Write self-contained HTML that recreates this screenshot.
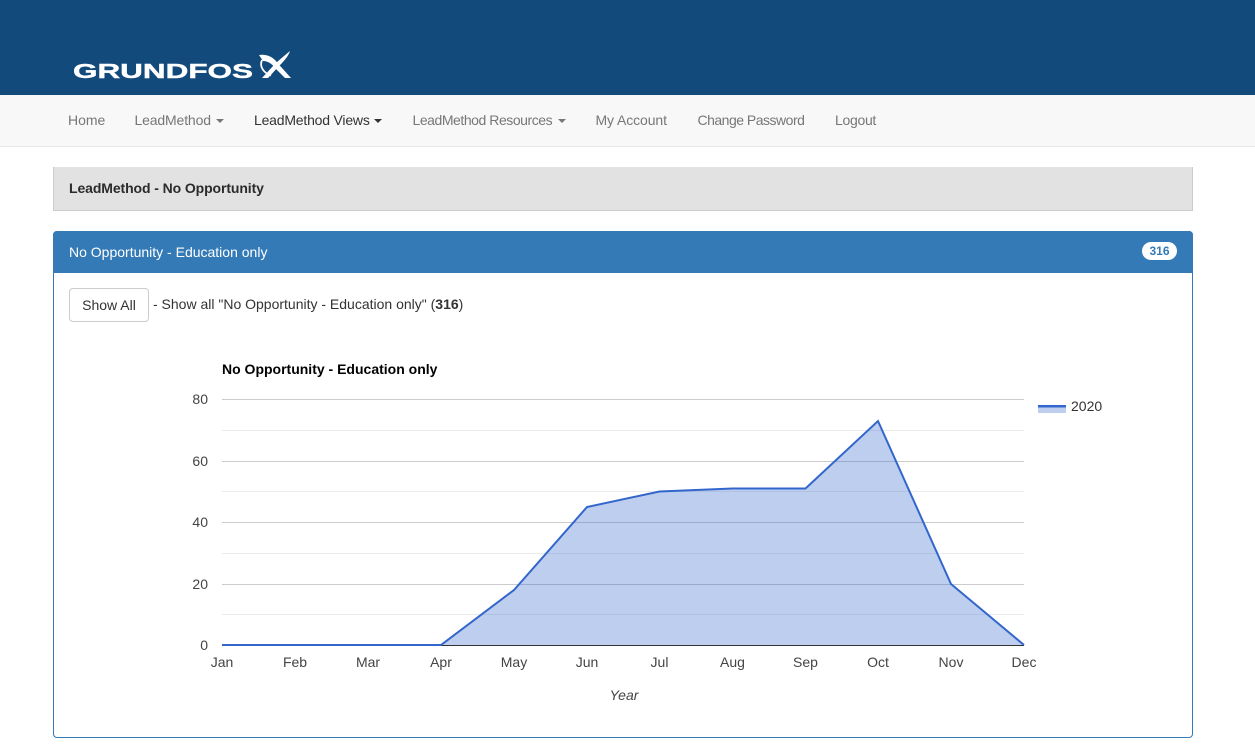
<!DOCTYPE html>
<html><head><meta charset="utf-8"><title>LeadMethod</title>
<style>
html,body{margin:0;padding:0;background:#fff}
body{width:1255px;height:751px;position:relative;overflow:hidden;font-family:"Liberation Sans",sans-serif;font-size:14px;color:#333}
.a{position:absolute;white-space:nowrap}
.n{top:112px;line-height:16px;font-size:14px;color:#777}
.c{display:inline-block;width:0;height:0;border-top:4px solid #777;border-left:4px solid transparent;border-right:4px solid transparent;vertical-align:middle;margin-left:1px;letter-spacing:0}
</style></head><body>
<div class="a" style="left:0;top:0;width:1255px;height:95px;background:#134a7c"></div>
<svg class="a" style="left:0;top:0" width="320" height="95" viewBox="0 0 320 95">
<text x="73" y="78" font-family="Liberation Sans" font-weight="700" font-size="20" fill="#fff" stroke="#fff" stroke-width=".4" textLength="180" lengthAdjust="spacingAndGlyphs">GRUNDFOS</text>
<path d="M259 55C265 54 271 56 275 60C278 63 280 66 282 68L291 78H285L276 69C273 65 269 61 263 61Z" fill="#fff"/>
<path d="M262 60C259 67 264 73 271 75.500" fill="none" stroke="#fff" stroke-width="1.800"/>
<path d="M290 51C288 57 283 62 279 66L268 78H262L274 65C279 60 284 56 290 51Z" fill="#fff"/>
</svg>
<div class="a" style="left:0;top:95px;width:1255px;height:51px;background:#f8f8f8;border-bottom:1px solid #e7e7e7"></div>
<div class="a n" style="left:68px">Home</div>
<div class="a n" style="left:134.5px;letter-spacing:-.15px">LeadMethod <span class="c"></span></div>
<div class="a n" style="left:254px;color:#333;letter-spacing:-.2px">LeadMethod Views <span class="c" style="border-top-color:#333"></span></div>
<div class="a n" style="left:412.5px;letter-spacing:-.45px">LeadMethod Resources <span class="c" style="margin-left:2px"></span></div>
<div class="a n" style="left:595.5px;letter-spacing:-.1px">My Account</div>
<div class="a n" style="left:697.5px;letter-spacing:-.5px">Change Password</div>
<div class="a n" style="left:835px;letter-spacing:-.3px">Logout</div>
<div class="a" style="left:53px;top:167px;width:1138px;height:43px;background:#e2e2e2;border:1px solid #ccc;border-top:0"></div>
<div class="a" style="left:69px;top:180px;line-height:16px;font-size:14px;letter-spacing:-.1px;font-weight:700;color:#2b2b2b">LeadMethod - No Opportunity</div>
<div class="a" style="left:53px;top:231px;width:1138px;height:505px;border:1px solid #337ab7;border-radius:4px"></div>
<div class="a" style="left:53px;top:231px;width:1140px;height:42px;background:#337ab7;border-radius:4px 4px 0 0"></div>
<div class="a" style="left:69px;top:244px;line-height:16px;color:#fff">No Opportunity - Education only</div>
<div class="a" style="left:1142px;top:242px;width:35px;height:18px;border-radius:10px;background:#fff;color:#337ab7;font-size:12px;font-weight:700;line-height:18px;text-align:center">316</div>
<div class="a" style="left:69px;top:288px;width:78px;height:32px;border:1px solid #ccc;border-radius:4px;background:#fff;line-height:32px;text-align:center">Show All</div>
<div class="a" style="left:153px;top:296px;line-height:16px">- Show all "No Opportunity - Education only" (<b>316</b>)</div>
<svg class="a" style="left:0;top:340px" width="1255" height="380" viewBox="0 340 1255 380" font-family="Liberation Sans">
<text x="222" y="374" font-size="14" font-weight="700" fill="#000">No Opportunity - Education only</text>
<g stroke="#ebebeb" shape-rendering="crispEdges"><path d="M222 430.5H1024M222 491.5H1024M222 553.5H1024M222 614.5H1024"/></g>
<g stroke="#ccc" shape-rendering="crispEdges"><path d="M222 399.5H1024M222 461.5H1024M222 522.5H1024M222 584.5H1024"/></g>
<path d="M441 645L514 590L587 507L659.500 491.500L732.500 488.500L805.500 488.500L878 421L951 584L1024 645Z" fill="#3366cc" fill-opacity=".32"/>
<path d="M222 645.500H1024" stroke="#333" shape-rendering="crispEdges"/>
<path d="M222 645L441 645L514 590L587 507L659.500 491.500L732.500 488.500L805.500 488.500L878 421L951 584L1024 645" fill="none" stroke="#3366cc" stroke-width="2"/>
<g font-size="14" fill="#444" text-anchor="end"><text x="208" y="404">80</text><text x="208" y="466">60</text><text x="208" y="527">40</text><text x="208" y="589">20</text><text x="208" y="650">0</text></g>
<g font-size="14" fill="#444" text-anchor="middle"><text x="222" y="667">Jan</text><text x="295" y="667">Feb</text><text x="368" y="667">Mar</text><text x="441" y="667">Apr</text><text x="514" y="667">May</text><text x="587" y="667">Jun</text><text x="659.500" y="667">Jul</text><text x="732.500" y="667">Aug</text><text x="805.500" y="667">Sep</text><text x="878" y="667">Oct</text><text x="951" y="667">Nov</text><text x="1024" y="667">Dec</text></g>
<text x="624" y="700" font-size="14" font-style="italic" fill="#444" text-anchor="middle">Year</text>
<rect x="1038" y="405" width="28" height="8" fill="#3366cc" fill-opacity=".32"/>
<rect x="1038" y="405" width="28" height="2.500" fill="#3366cc"/>
<text x="1071" y="411" font-size="14" fill="#333">2020</text>
</svg>
</body></html>
